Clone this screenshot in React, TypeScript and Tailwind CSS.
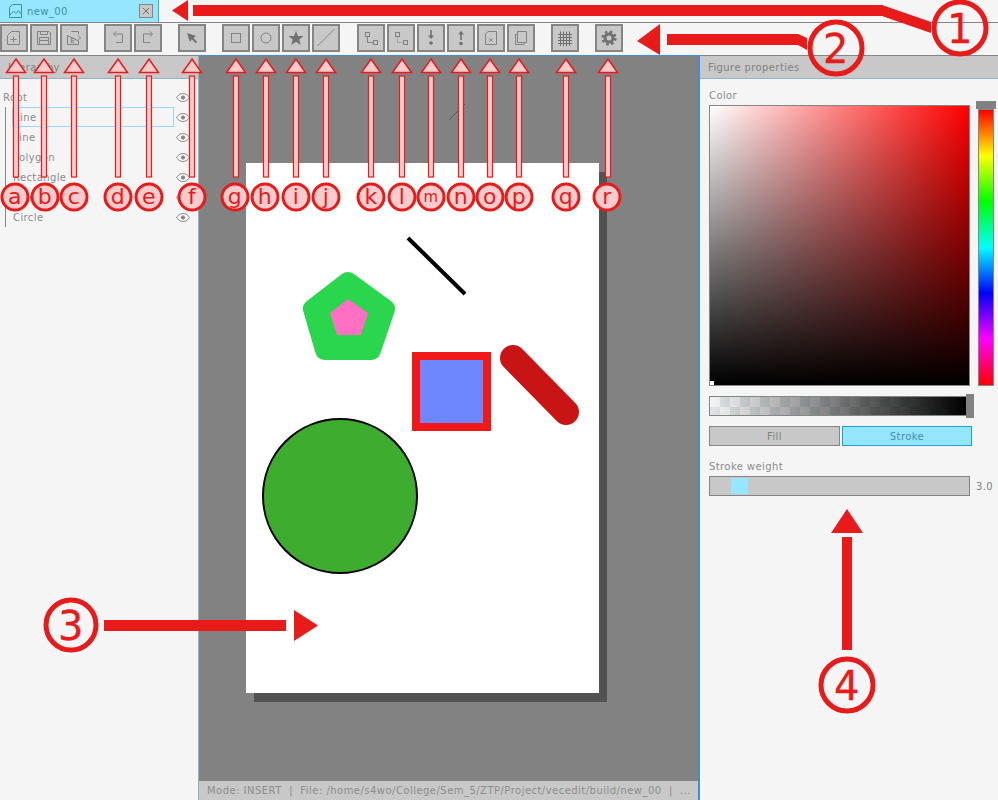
import React from 'react';

const RED = '#e81a1a';
const PINK = '#f8cccc';

const markers = [
  ['a', 16, 15], ['b', 44, 45], ['c', 74, 74], ['d', 118, 118], ['e', 149, 149], ['f', 192, 192],
  ['g', 236, 235], ['h', 266, 265], ['i', 296, 296], ['j', 326, 326], ['k', 371, 371], ['l', 402, 402],
  ['m', 431, 431], ['n', 461, 461], ['o', 490, 490], ['p', 519, 519], ['q', 566, 566], ['r', 608, 607],
] as const;

const treeRows = ['Line', 'Line', 'Polygon', 'Rectangle', 'Line', 'Circle'];

const Doc = ({ d = 'M9.5 5.5H17.5V18.5H5.5V9.5Z' }: { d?: string }) => <path d={d} />;

const icons: Record<string, React.ReactNode> = {
  add: <><Doc /><path d="M11.5 10.5V16.5M8.5 13.5H14.5" /></>,
  save: <><path d="M5.5 5.5H17L18.5 7V18.5H5.5Z" /><path d="M8.5 5.5V8.5H15.5V5.5M7.5 18.5V11.5H16.5V18.5M7.5 14.5H16.5" /></>,
  exportFile: <><Doc d="M9.5 5.5H16.5V8M16.5 15V18.5H5.5V9.5Z" /><path d="M16 9.5L18.5 12L16 14.5" /><text x="8.5" y="16.5" fontSize="7" fill="#707070" stroke="none" fontFamily="DejaVu Sans">E</text></>,
  undo: <><path d="M10 5.5L7.5 8L10 10.5" /><path d="M8 8H16.5V16.5H10" /></>,
  redo: <><path d="M14 5.5L16.5 8L14 10.5" /><path d="M16 8H7.5V16.5H14" /></>,
  cursor: <path d="M7 7L16 10L13.5 12L17 16L15.5 17.2L11.8 13.2L10 16Z" fill="#707070" stroke="none" />,
  rect: <rect x="7.5" y="7.5" width="9" height="9" />,
  circle: <circle cx="12" cy="12" r="5" />,
  star: <path d="M12 5L14 10H19.5L15.2 13.4L16.8 19L12 15.8L7.2 19L8.8 13.4L4.5 10H10Z" fill="#707070" stroke="none" />,
  line: <path d="M3.5 20L20 3.5" />,
  link: <><rect x="6.5" y="6.5" width="4" height="4" /><rect x="14.5" y="14.5" width="4" height="4" /><path d="M8.5 10.5V16.5H14.5" /></>,
  unlink: <><rect x="6.5" y="6.5" width="4" height="4" /><rect x="14.5" y="14.5" width="4" height="4" /><path d="M8.5 10.5V16.5H14.5" strokeDasharray="1 1" /></>,
  down: <><path d="M12 4V11" strokeWidth="2" /><path d="M9 9.5H15L12 13Z" fill="#707070" stroke="none" /><circle cx="12" cy="17" r="1.8" fill="#707070" stroke="none" /></>,
  up: <><path d="M12 7V14" strokeWidth="2" /><path d="M9 8.5H15L12 5Z" fill="#707070" stroke="none" /><circle cx="12" cy="17.5" r="1.8" fill="#707070" stroke="none" /></>,
  remove: <><Doc d="M9 5.5H17.5V18.5H6.5V8Z" /><path d="M10.5 12.5L13.5 15.5M13.5 12.5L10.5 15.5" /></>,
  copy: <><path d="M8.5 5.5H17.5V16.5H8.5Z" /><path d="M8.5 8.5H6.5V18.5H15V16.5" /></>,
  grid: <path d="M5 8.5H19M5 11.5H19M5 14.5H19M5 17.5H19M7.5 5.5V20M10.5 5.5V20M13.5 5.5V20M16.5 5.5V20" stroke="#707070" />,
  gear: <><circle cx="12" cy="12" r="4" strokeWidth="3" stroke="#707070" /><circle cx="12" cy="12" r="6.3" strokeWidth="2.6" stroke="#707070" strokeDasharray="2.5 2.45" /></>,
};

const toolGroups = [
  ['add', 'save', 'exportFile'],
  ['undo', 'redo'],
  ['cursor'],
  ['rect', 'circle', 'star', 'line'],
  ['link', 'unlink', 'down', 'up', 'remove', 'copy'],
  ['grid'],
  ['gear'],
];

function ToolButton({ name }: { name: string }) {
  return (
    <button className="flex h-7 w-7 items-center justify-center border-2 border-[#858585] bg-[#c8c8c8]">
      <svg width="24" height="24" viewBox="0 0 24 24" fill="none" stroke="#828282" strokeWidth="1">
        {icons[name]}
      </svg>
    </button>
  );
}

function Eye() {
  return (
    <svg width="14" height="9" viewBox="0 0 14 9" fill="none" stroke="#828282" strokeWidth="1">
      <path d="M0.5 4.5C3 1 5 0.5 7 0.5C9 0.5 11 1 13.5 4.5C11 8 9 8.5 7 8.5C5 8.5 3 8 0.5 4.5Z" />
      <circle cx="7" cy="4.5" r="1.6" fill="#828282" />
    </svg>
  );
}

function PanelHeader({ title }: { title: string }) {
  return (
    <div className="flex h-[23px] items-center border-b border-[#8fb3c6] bg-[#c8c8c8] pl-2 text-[#828282]">
      {title}
    </div>
  );
}

function Annotations() {
  return (
    <svg className="pointer-events-none absolute left-0 top-0 z-10" width="998" height="800" viewBox="0 0 998 800">
      <g fill={RED}>
        <path d="M172 10.5L188 0V21Z" />
        <path d="M193 5H882L931 22V33L882 16H193Z" />
        <path d="M637 41L660 24V55Z" />
        <path d="M667 34H798L807 38V50L798 45H667Z" />
        <path d="M294 610L318 625.5L294 641Z" />
        <path d="M104 620H286V631H104Z" />
        <path d="M847 509L863 533H831Z" />
        <path d="M842 537H852V650H842Z" />
      </g>
      <g fill="none" stroke={RED} strokeWidth="5">
        <circle cx="960" cy="28" r="26" />
        <circle cx="836" cy="48" r="26" />
        <circle cx="71" cy="625" r="25" />
        <circle cx="847" cy="685" r="26" />
      </g>
      <g fill={RED} stroke={RED} strokeWidth="0.3" fontFamily="DejaVu Sans" fontSize="40" textAnchor="middle">
        <text x="960" y="43">1</text>
        <text x="836" y="63">2</text>
        <text x="71" y="640">3</text>
        <text x="847" y="700">4</text>
      </g>
      {markers.map(([letter, stem, center]) => (
        <g key={letter}>
          <path d={`M${stem} 59L${stem + 9.5} 72.5H${stem - 9.5}Z`} fill={PINK} stroke={RED} strokeWidth="1.5" />
          <rect x={stem - 2.5} y="76" width="5" height="101" fill={PINK} stroke={RED} strokeWidth="1.2" />
          <circle cx={center} cy="197" r="13" fill={PINK} stroke={RED} strokeWidth="3" />
          <text x={center} y={letter === 'm' ? 202 : 204} textAnchor="middle" fill={RED} fontFamily="DejaVu Sans" fontSize={letter === 'm' ? 15 : 22}>
            {letter}
          </text>
        </g>
      ))}
    </svg>
  );
}

export default function App() {
  return (
    <div className="relative flex h-[800px] w-[998px] flex-col overflow-hidden bg-[#f5f5f5] font-['DejaVu_Sans',sans-serif] text-[10px] tracking-[0.4px] text-[#8c8c8c]">
      <div className="flex h-[23px] border-b border-[#858585]">
        <div className="flex w-[159px] items-center border-r border-[#3aa5d0] bg-[#96e6ff] pl-[9px] pr-[5px] text-[#3c8fb0]">
          <svg width="13" height="14" viewBox="0 0 13 14" fill="none" stroke="#3c8fb0" strokeWidth="1">
            <path d="M3.5 0.5H12.5V13.5H0.5V3.5Z" />
            <path d="M1 11L4.5 7L7 9.5L9.5 6.5L12 10" />
          </svg>
          <span className="ml-[5px] flex-1">new_00</span>
          <button className="flex h-[14px] w-[14px] items-center justify-center border border-[#858585] bg-[#c8c8c8]">
            <svg width="8" height="8" viewBox="0 0 8 8" stroke="#707070" strokeWidth="1">
              <path d="M1 1L7 7M7 1L1 7" />
            </svg>
          </button>
        </div>
      </div>

      <div className="flex h-[33px] items-center gap-4 border-b border-[#858585] pb-[2px]">
        {toolGroups.map(group => (
          <div key={group[0]} className={`flex gap-[2px] ${group[0] === 'link' ? 'ml-px' : ''}`}>
            {group.map(name => <ToolButton key={name} name={name} />)}
          </div>
        ))}
      </div>

      <div className="flex min-h-0 flex-1">
        <aside className="w-[198px]">
          <PanelHeader title="Hierarchy" />
          <div className="pl-[3px] pt-[8px]">
            <div className="flex h-5 items-center justify-between pr-[8px]">
              <span>Root</span>
              <Eye />
            </div>
            <div className="ml-[2px] border-l border-[#858585] pl-[6px]">
              {treeRows.map((row, i) => (
                <div key={i} className="flex h-5 items-center justify-between pr-[8px]">
                  <span className={`flex h-5 w-[162px] items-center pl-[1px] ${i === 0 ? 'border border-[#96d8ff]' : ''}`}>{row}</span>
                  <Eye />
                </div>
              ))}
            </div>
          </div>
        </aside>

        <main className="relative flex min-w-0 flex-1 flex-col border-l border-[#8fb3c6] border-r-2 border-r-[#3d8fd8] border-t border-t-[#3d8fd8] bg-[#828282] -mt-px">
          <div className="flex-1 pl-[47px] pt-[107px]">
            <div className="h-[530px] w-[353px] bg-white shadow-[8px_9px_0_#525252]" />
          </div>
          <svg className="absolute left-0 top-0" width="500" height="725" viewBox="199 56 500 725">
            <path d="M449 120L465 104" stroke="#5a5a5a" strokeWidth="1" />
            <path d="M408 238L465 294" stroke="#000" strokeWidth="4" />
            <path d="M348 282L385 309L371 350H325L313 309Z" fill="#2bd64f" stroke="#2bd64f" strokeWidth="20" strokeLinejoin="round" />
            <path d="M348 299L368 313L361 335H337L330 313Z" fill="#ff6fc2" />
            <rect x="416" y="356" width="71" height="71" fill="#6e87ff" stroke="#f01818" strokeWidth="8" />
            <path d="M513 358L566 412" stroke="#c81414" strokeWidth="26" strokeLinecap="round" />
            <circle cx="340" cy="496" r="77" fill="#3dac2f" stroke="#000" strokeWidth="2" />
          </svg>
          <div className="flex h-[19px] items-center bg-[#c8c8c8] pl-2 tracking-[0.47px] whitespace-nowrap">
            Mode: INSERT&nbsp; |&nbsp; File: /home/s4wo/College/Sem_5/ZTP/Project/vecedit/build/new_00&nbsp; |&nbsp; ...
          </div>
        </main>

        <aside className="w-[298px]">
          <PanelHeader title="Figure properties" />
          <div className="pl-[9px] pt-[11px]">
            <div className="h-[15px] leading-[12px]">Color</div>
            <div className="flex h-[281px]">
              <div className="relative h-[281px] w-[261px] border border-[#858585] bg-[linear-gradient(to_top,#000,transparent),linear-gradient(to_right,#fff,#f00)]">
                <div className="absolute bottom-0 left-0 h-1 w-1 bg-white" />
              </div>
              <div className="relative ml-2 mt-1 h-[277px] w-4 border border-[#858585] bg-[linear-gradient(to_bottom,#f00,#ff0,#0f0,#0ff,#00f,#f0f,#f00)]">
                <div className="absolute -left-[3px] -top-[9px] h-2 w-5 bg-[#828282]" />
              </div>
            </div>
            <div className="relative mt-[10px] h-5 w-[258px] border border-[#858585] bg-[conic-gradient(#dfe5e5_25%,#f5f5f5_0_50%,#dfe5e5_0_75%,#f5f5f5_0)] bg-[length:20px_20px]">
              <div className="h-full w-full bg-[linear-gradient(to_right,transparent,#000)]" />
              <div className="absolute -right-[8px] -top-[3px] h-6 w-2 bg-[#828282]" />
            </div>
            <div className="mt-[10px] flex h-5 gap-[2px]">
              <button className="w-[131px] border border-[#858585] bg-[#c8c8c8] text-[#828282]">Fill</button>
              <button className="w-[130px] border border-[#1f9fd8] bg-[#96e6ff] text-[#3c8fb0]">Stroke</button>
            </div>
            <div className="mt-[15px] h-[15px] leading-[12px]">Stroke weight</div>
            <div className="flex items-center">
              <div className="relative h-5 w-[261px] border border-[#858585] bg-[#c8c8c8]">
                <div className="absolute left-[21px] top-px h-4 w-[17px] bg-[#96e6ff]" />
              </div>
              <span className="ml-[6px] text-[#828282]">3.0</span>
            </div>
          </div>
        </aside>
      </div>

      <Annotations />
    </div>
  );
}
